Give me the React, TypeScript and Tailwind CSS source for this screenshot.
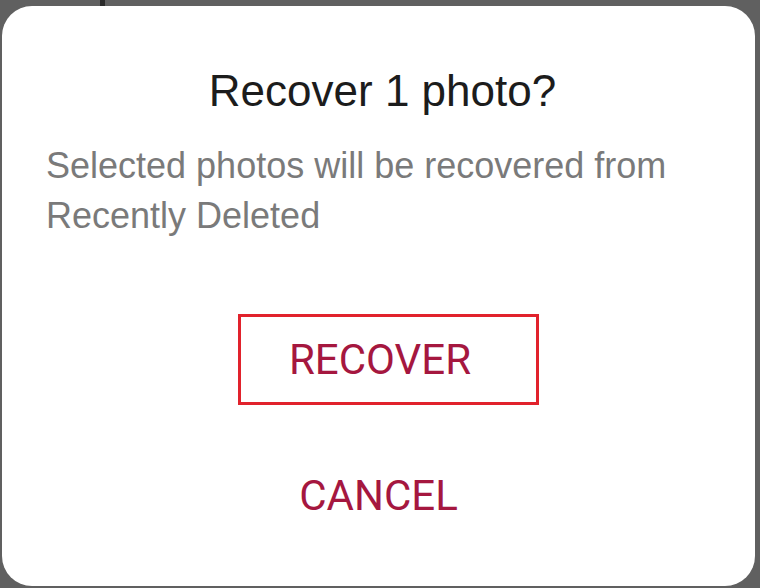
export default function App() {
  return (
    <div className="w-[760px] h-[588px] bg-[#606060] flex flex-col">
      {/* top strip of the page behind the sheet */}
      <div className="h-[6px] flex shrink-0">
        <div className="ml-[100px] w-[5px] h-[6px] bg-[#2a2a2a]" />
      </div>
      <div className="flex-1 ml-[2px] mr-[5px] mb-[2px] bg-white rounded-[30px] flex flex-col">
        <h1 className="mt-[59px] pl-[8px] text-center text-[44px] leading-[52px] text-[#1c1c1c] font-['Liberation_Sans',Arial,sans-serif]">
          Recover 1 photo?
        </h1>
        <p className="mt-[24px] ml-[44px] mr-[40px] text-[36px] leading-[50px] text-[#7a7a7a] font-['Liberation_Sans',Arial,sans-serif]">
          Selected photos will be recovered from Recently Deleted
        </p>
        <div className="mt-[73px] flex justify-center">
          <button className="ml-[20px] pr-[17px] w-[301px] h-[91px] border-[3px] border-[#e1222c] text-[42px] leading-[50px] text-[#a5173f] font-['Roboto','Liberation_Sans',sans-serif]">
            RECOVER
          </button>
        </div>
        <div className="mt-[66px] flex justify-center">
          <button className="text-[42px] leading-[50px] text-[#a5173f] font-['Roboto','Liberation_Sans',sans-serif]">
            CANCEL
          </button>
        </div>
      </div>
    </div>
  );
}
